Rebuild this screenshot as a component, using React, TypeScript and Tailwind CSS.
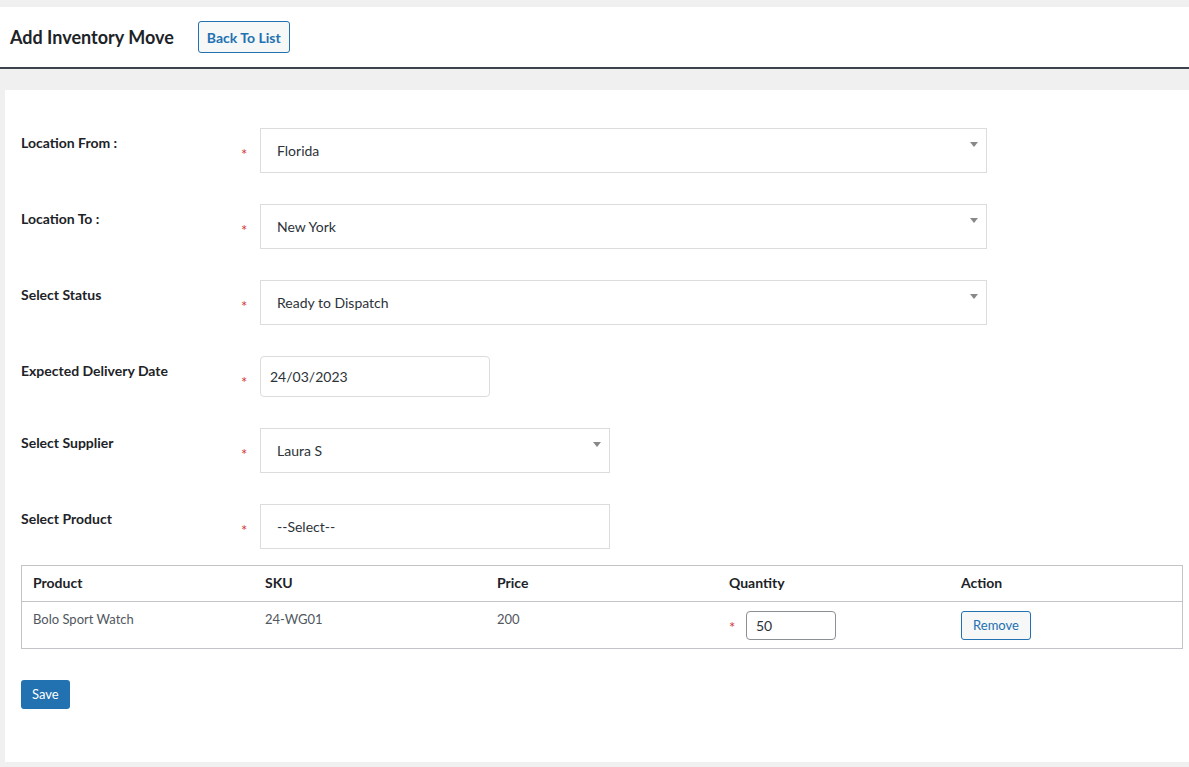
import React from "react";

const font = { fontFamily: "Lato, 'Noto Sans', sans-serif" };

type Field = {
  label: string;
  value: string;
  width: string;
  kind: "select" | "date" | "plain";
};

const fields: Field[] = [
  { label: "Location From :", value: "Florida", width: "w-[727px]", kind: "select" },
  { label: "Location To :", value: "New York", width: "w-[727px]", kind: "select" },
  { label: "Select Status", value: "Ready to Dispatch", width: "w-[727px]", kind: "select" },
  { label: "Expected Delivery Date", value: "24/03/2023", width: "w-[230px]", kind: "date" },
  { label: "Select Supplier", value: "Laura S", width: "w-[350px]", kind: "select" },
  { label: "Select Product", value: "--Select--", width: "w-[350px]", kind: "plain" },
];

const Star = () => <span className="text-[#d63638] text-[15px] leading-none">*</span>;

const FormRow = ({ field }: { field: Field }) => {
  const isDate = field.kind === "date";
  return (
    <div className={`flex items-start ${isDate ? "h-[72px]" : "h-[76px]"}`}>
      <div className="w-[220px] pt-[4px] text-[14px] font-bold text-[#1d2327]">{field.label}</div>
      <div className="w-[19px] pt-[14px]">
        <Star />
      </div>
      {isDate ? (
        <div className={`${field.width} h-[41px] border border-[#dcdcde] rounded-[4px] flex items-center px-[9px] text-[14px] text-[#2c3338]`}>
          {field.value}
        </div>
      ) : (
        <div className={`${field.width} h-[45px] border border-[#dcdcde] flex items-center justify-between pl-[16px] pr-[8px] text-[14px] text-[#2c3338] relative`}>
          <span>{field.value}</span>
          {field.kind === "select" && (
            <svg width="8" height="5" viewBox="0 0 8 5" className="absolute right-[8px] top-[13px]">
              <path d="M0 0h8L4 5z" fill="#888" />
            </svg>
          )}
        </div>
      )}
    </div>
  );
};

const columns = ["Product", "SKU", "Price", "Quantity", "Action"];

export default function App() {
  return (
    <div className="min-h-[767px] bg-[#f0f0f1] pt-[7px]" style={font}>
      <div className="h-[62px] bg-white border-b-2 border-[#3c434a] flex items-center pl-[10px]">
        <h1 className="text-[18px] font-bold text-[#1d2327] mr-[24px]">Add Inventory Move</h1>
        <button className="h-[32px] px-[8px] border border-[#2271b1] rounded-[3px] bg-[#f6f7f7] text-[#2271b1] text-[14px] font-bold">
          Back To List
        </button>
      </div>

      <div className="ml-[5px] mt-[21px] bg-white h-[672px] pt-[38px] pl-[16px] pr-[6px]">
        {fields.map((f) => (
          <FormRow key={f.label} field={f} />
        ))}

        <div className="-mt-[15px] border border-[#c3c4c7]">
          <div className="grid grid-cols-5 h-[36px] pt-[6px] border-b border-[#c3c4c7]">
            {columns.map((c) => (
              <div key={c} className="pl-[11px] text-[14px] font-bold text-[#1d2327]">
                {c}
              </div>
            ))}
          </div>
          <div className="grid grid-cols-5 h-[46px] text-[13px] text-[#50575e]">
            <div className="pl-[11px] pt-[8px]">Bolo Sport Watch</div>
            <div className="pl-[11px] pt-[8px]">24-WG01</div>
            <div className="pl-[11px] pt-[8px]">200</div>
            <div className="pl-[11px] pt-[9px] flex items-start">
              <span className="w-[17px] pt-[8px]"><Star /></span>
              <div className="w-[90px] h-[29px] border border-[#8c8f94] rounded-[4px] flex items-center px-[9px] text-[14px] text-[#2c3338]">
                50
              </div>
            </div>
            <div className="pl-[11px] pt-[9px]">
              <button className="h-[29px] w-[70px] border border-[#2271b1] rounded-[3px] bg-[#f6f7f7] text-[#2271b1] text-[13px]">
                Remove
              </button>
            </div>
          </div>
        </div>

        <button className="mt-[31px] h-[29px] px-[11px] rounded-[3px] bg-[#2271b1] text-white text-[13px]">
          Save
        </button>
      </div>
    </div>
  );
}
